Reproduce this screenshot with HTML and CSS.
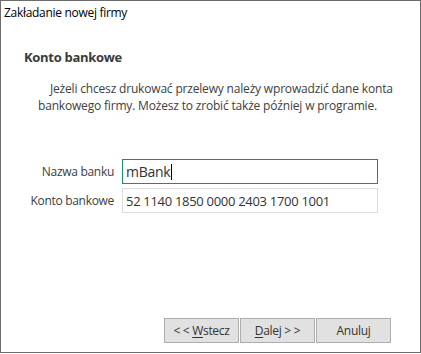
FILE: index.html
```html
<!DOCTYPE html>
<html lang="pl">
<head>
    <meta charset="UTF-8">
    <title>Zakładanie nowej firmy</title>
    <link rel="stylesheet" href="styles.css">
</head>
<body>

<div class="window">
    <div class="titlebar">Zakładanie nowej firmy</div>

    <div class="content">
        <h2 class="step-title">Konto bankowe</h2>
        <p class="intro">Jeżeli chcesz drukować przelewy należy wprowadzić dane konta bankowego firmy. Możesz to zrobić także później w programie.</p>

        <div class="form">
            <div class="row">
                <span class="label">Nazwa banku</span>
                <div class="field focused"><span>mBank</span><span class="caret"></span></div>
            </div>
            <div class="row">
                <span class="label">Konto bankowe</span>
                <div class="field"><span>52 1140 1850 0000 2403 1700 1001</span></div>
            </div>
        </div>
    </div>

    <div class="buttons">
        <button>&lt; &lt; <u>W</u>stecz</button>
        <button><u>D</u>alej &gt; &gt;</button>
        <button class="cancel">Anuluj</button>
    </div>
</div>

</body>
</html>
```

FILE: styles.css
```css
body {
    margin: 0;
    padding: 0;
    background-color: #ffffff;
    font-family: "Open Sans", "Noto Sans", sans-serif;
    letter-spacing: -0.3px;
}
.window {
    width: 421px;
    height: 353px;
    box-sizing: border-box;
    border: 1px solid #6d6d6d;
    background-color: #ffffff;
    display: flex;
    flex-direction: column;
}
.titlebar {
    padding: 3px 0 0 3px;
    height: 22px;
    font-size: 12px;
    color: #000000;
}
.content {
    padding: 0 0 0 23px;
}
.step-title {
    margin: 22px 0 0 0;
    font-size: 13px;
    font-weight: bold;
    color: #3a3a3a;
}
.intro {
    margin: 14px 0 0 14px;
    width: 360px;
    text-indent: 12px;
    font-size: 12px;
    line-height: 17px;
    letter-spacing: -0.18px;
    color: #404040;
}
.form {
    margin-top: 45px;
    display: flex;
    flex-direction: column;
    gap: 4px;
}
.row {
    display: flex;
    align-items: center;
    gap: 8px;
}
.label {
    width: 90px;
    text-align: right;
    font-size: 12px;
    color: #404040;
}
.field {
    width: 256px;
    height: 25px;
    box-sizing: border-box;
    border: 1px solid #dcdcdc;
    padding: 0 0 0 3px;
    display: flex;
    align-items: center;
    font-size: 13px;
    color: #333333;
}
.field.focused {
    border-color: #1c8a78;
    font-size: 14px;
}
.caret {
    width: 1px;
    height: 16px;
    background-color: #000000;
    margin-left: 1px;
}
.buttons {
    margin-top: auto;
    padding: 0 29px 9px 0;
    display: flex;
    justify-content: flex-end;
    gap: 1px;
}
button {
    width: 75px;
    height: 25px;
    background-color: #e1e1e1;
    border: 1px solid #adadad;
    font-family: inherit;
    letter-spacing: inherit;
    font-size: 12px;
    color: #333333;
    padding: 0;
}
button u {
    text-underline-offset: 2px;
}
```
